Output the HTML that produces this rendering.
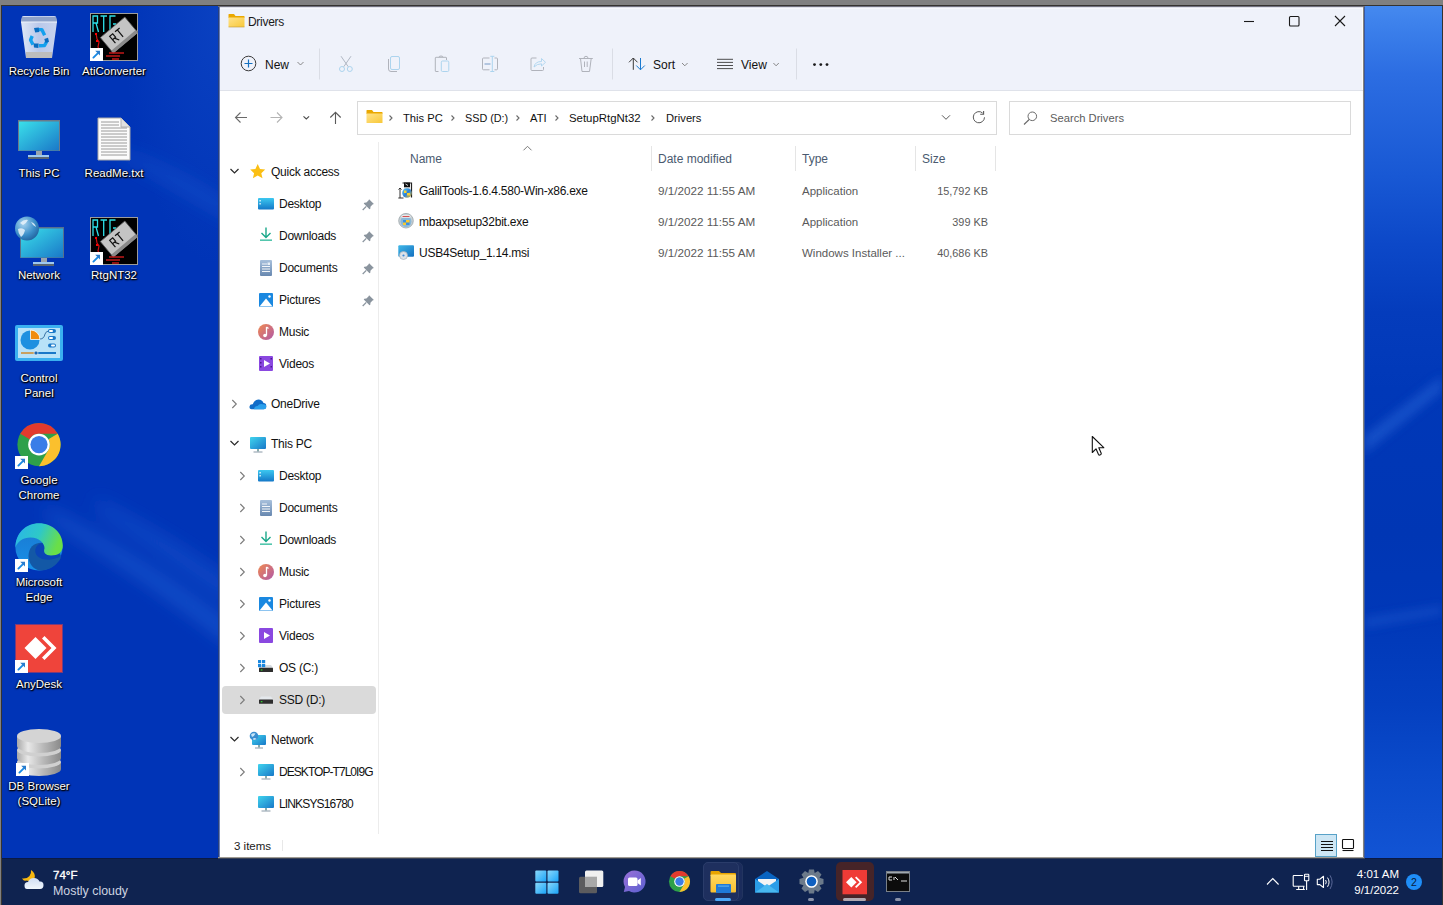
<!DOCTYPE html>
<html><head><meta charset="utf-8">
<style>
*{margin:0;padding:0;box-sizing:border-box}
html,body{width:1443px;height:905px;overflow:hidden;background:#808080;font-family:"Liberation Sans",sans-serif;position:relative}
.a{position:absolute;display:block}
.t{position:absolute;white-space:nowrap;font-size:11.5px;line-height:14px;color:#111}
.lbl{position:absolute;width:90px;text-align:center;color:#fff;font-size:11.5px;line-height:15px;text-shadow:1px 1px 1px #000,0 0 2px #000,0 1px 2px #000}
.sep{position:absolute;width:1px;background:#dde0e7}
</style></head><body>
<div class="a" style="left:1px;top:5px;width:1442px;height:900px;background:#353330"></div>
<svg class="a" style="left:2px;top:6px" width="1440" height="852">
<defs>
<linearGradient id="rg" x1="0" y1="0" x2="0" y2="1">
<stop offset="0" stop-color="#4589ef"/><stop offset="0.03" stop-color="#3a7eea"/><stop offset="0.08" stop-color="#2c6de2"/><stop offset="0.2" stop-color="#1858d4"/><stop offset="0.28" stop-color="#0c48c8"/><stop offset="0.36" stop-color="#043cbc"/><stop offset="0.45" stop-color="#0038b8"/><stop offset="0.62" stop-color="#0036b4"/><stop offset="0.72" stop-color="#0038b8"/><stop offset="0.82" stop-color="#0440c0"/><stop offset="0.9" stop-color="#0a4aca"/><stop offset="1" stop-color="#1254d4"/>
</linearGradient>
<linearGradient id="streak" x1="0" y1="0" x2="1" y2="0">
<stop offset="0" stop-color="#3f80ea" stop-opacity="0"/><stop offset="0.5" stop-color="#3f80ea" stop-opacity="0.5"/><stop offset="1" stop-color="#3f80ea" stop-opacity="0"/>
</linearGradient>
<radialGradient id="tr" cx="1" cy="0" r="1">
<stop offset="0" stop-color="#1a55d0" stop-opacity="0.4"/><stop offset="1" stop-color="#1a55d0" stop-opacity="0"/>
</radialGradient>
</defs>
<rect x="0" y="0" width="1440" height="852" fill="#0034b7"/>
<rect x="120" y="0" width="98" height="260" fill="url(#tr)"/>
<rect x="1362" y="0" width="78" height="852" fill="url(#rg)"/>
<g filter="url(#blr2)"><path d="M1362 430 L1440 370 L1440 385 L1362 448 Z" fill="#3a7ce8" opacity="0.35"/><path d="M1362 612 L1440 600 L1440 608 L1362 622 Z" fill="#3a7ce8" opacity="0.25"/></g>
<filter id="blr2" x="-50%" y="-50%" width="200%" height="200%"><feGaussianBlur stdDeviation="5"/></filter>
<filter id="blr" x="-50%" y="-50%" width="200%" height="200%"><feGaussianBlur stdDeviation="9"/></filter>
<g filter="url(#blr)"><path d="M40 500 Q140 550 230 620 L230 640 Q140 570 50 515 Z" fill="#3a7ce8" opacity="0.4"/>
<path d="M90 490 Q170 530 230 575 L230 600 Q160 550 100 510 Z" fill="#2f6ee0" opacity="0.3"/></g>
<g filter="url(#blr)"><path d="M110 140 Q170 160 230 200 L230 215 Q170 180 120 152 Z" fill="#2f6ee0" opacity="0.3"/></g>
</svg>
<svg width="0" height="0" style="position:absolute">
<defs>
<symbol id="sc" viewBox="0 0 13 13"><rect x="0" y="0" width="13" height="13" fill="#fff"/><path d="M3.4 9.6 L8.2 4.8" stroke="#1a8ae4" stroke-width="1.9" stroke-linecap="round"/><path d="M5.2 2.8 H10 V7.6 Z" fill="#2a7ccc"/></symbol>
<symbol id="rtg" viewBox="0 0 48 48">
<rect x="0.5" y="0.5" width="47" height="47" fill="#000" stroke="#9c9c9c"/>
<g fill="none" stroke="#2de0e8" stroke-width="1.3">
<path d="M3 19 V3 H7.5 V10 H3 M6 10 L8.5 19"/><path d="M10.5 3 H17 M13.7 3 V19"/><path d="M25.5 3 H20 V19 H25.5 V11 H23"/>
</g>
<path d="M6 20 L7 26 L9 29 L8 34 L10 38" stroke="#d01010" stroke-width="1.2" fill="none"/>
<rect x="5" y="20" width="2" height="2" fill="#f00"/><rect x="6" y="27" width="2" height="2" fill="#f00"/>
<g transform="rotate(-40 29 22)"><rect x="13" y="12" width="32" height="20" fill="#c4c4c4" stroke="#555" stroke-width="0.8"/><rect x="13" y="29" width="32" height="3.5" fill="#8a8a8a"/>
<path d="M21 26 V17 H25 V21.5 H21 M23.5 21.5 L26 26 M28 17 H34 M31 17 V26" stroke="#111" stroke-width="1.2" fill="none"/></g>
<path d="M19 40 H34 M16 43 H30 M22 46 H29" stroke="#c01818" stroke-width="1.5"/>
</symbol>
</defs></svg>
<!-- Recycle bin -->
<svg class="a" style="left:19px;top:14px" width="40" height="46" viewBox="0 0 40 46">
<defs><linearGradient id="bin" x1="0" x2="1"><stop offset="0" stop-color="#dfe7f6"/><stop offset="0.5" stop-color="#b9c8ea"/><stop offset="1" stop-color="#c8d3ee"/></linearGradient></defs>
<path d="M3 3 Q3 2 5 2 H35 Q37 2 37 3 L38 8 L33 44 H7 L2 8 Z" fill="url(#bin)"/>
<path d="M3 3 H37 L38 8 H2 Z" fill="#8ea2c8"/>
<path d="M2 8 H38" stroke="#eef3fc" stroke-width="1"/>
<rect x="7" y="38" width="26" height="6" fill="#bdbdbd"/>
<g fill="none" stroke-width="3.4" stroke="#14a0ee" stroke-linejoin="round">
<path d="M19.5 15.6 L22.8 15.6 L25.6 21.3"/>
<path d="M13.2 22 L11.6 26 L14 30.8"/>
<path d="M20 31.8 L25.5 31.5 L28 27"/>
</g>
<g fill="#0a6cc0"><path d="M15 14 L19.8 13.6 L20.2 18 L16.2 18.6Z"/><path d="M14.6 29.4 L19.6 29.6 L19.4 34 L15 33.6Z"/><path d="M25.3 25 L29 23.8 L30 27.8 L26.5 29Z"/></g>
</svg>
<div class="lbl" style="left:-6px;top:64px">Recycle Bin</div>
<svg class="a" style="left:90px;top:13px" width="48" height="48"><use href="#rtg"/><use href="#sc" x="0" y="35" width="13" height="13"/></svg>
<div class="lbl" style="left:69px;top:64px">AtiConverter</div>
<!-- This PC -->
<svg class="a" style="left:17px;top:118px" width="44" height="42" viewBox="0 0 44 42">
<defs><linearGradient id="mon" x1="0" y1="0" x2="1" y2="1"><stop offset="0" stop-color="#3ae0ea"/><stop offset="1" stop-color="#1a78c8"/></linearGradient></defs>
<rect x="1" y="2" width="42" height="31" fill="#6a7a8a"/>
<rect x="2" y="3.5" width="40" height="29" fill="url(#mon)"/>
<rect x="19" y="33" width="6" height="5" fill="#9aa4ae"/>
<rect x="11" y="37" width="21" height="2" fill="#9ec8f0"/>
<rect x="11" y="39" width="21" height="2" fill="#5a6572"/>
</svg>
<div class="lbl" style="left:-6px;top:166px">This PC</div>
<!-- ReadMe -->
<svg class="a" style="left:97px;top:117px" width="34" height="44" viewBox="0 0 34 44">
<path d="M1 1 H24 L33 10 V43 H1 Z" fill="#fbfbfb" stroke="#a8a8a8" stroke-width="1"/>
<path d="M24 1 V10 H33" fill="#e0e0e0" stroke="#b0b0b0" stroke-width="1"/>
<g stroke="#9a9a9a" stroke-width="1"><path d="M4 5 H22 M4 8 H22 M4 11 H30 M4 14 H30 M4 17 H30 M4 20 H30 M4 23 H30 M4 26 H30 M4 29 H30 M4 32 H30 M4 35 H30 M4 38 H30"/></g>
</svg>
<div class="lbl" style="left:69px;top:166px">ReadMe.txt</div>
<!-- Network -->
<svg class="a" style="left:14px;top:215px" width="50" height="52" viewBox="0 0 50 52">
<defs><radialGradient id="glb" cx="0.35" cy="0.3" r="0.8"><stop offset="0" stop-color="#a8d4f0"/><stop offset="0.6" stop-color="#3b8ec8"/><stop offset="1" stop-color="#1e5c98"/></radialGradient></defs>
<rect x="6" y="12" width="44" height="31" fill="#56708e"/>
<rect x="7" y="13.5" width="42" height="29" fill="url(#mon)"/>
<rect x="27" y="43" width="6" height="5" fill="#9aa4ae"/>
<rect x="19" y="47" width="21" height="2" fill="#9ec8f0"/>
<rect x="19" y="49" width="21" height="2" fill="#5a6572"/>
<circle cx="13" cy="13.5" r="12" fill="url(#glb)"/>
<path d="M6 8 Q10 4 14 5 Q12 9 9 10 Z M4 14 Q8 12 11 15 Q10 20 7 22 Q4 18 4 14 Z M17 7 Q21 8 22 12 Q19 11 17 7Z" fill="#e8f2fa" opacity="0.85"/>
</svg>
<div class="lbl" style="left:-6px;top:268px">Network</div>
<svg class="a" style="left:90px;top:217px" width="48" height="48"><use href="#rtg"/><use href="#sc" x="0" y="35" width="13" height="13"/></svg>
<div class="lbl" style="left:69px;top:268px">RtgNT32</div>
<!-- Control panel -->
<svg class="a" style="left:15px;top:325px" width="48" height="37" viewBox="0 0 48 37">
<rect x="0" y="0" width="48" height="36" rx="2" fill="#3ab0f0"/>
<rect x="3" y="3" width="42" height="30" fill="#b8e2f8"/>
<circle cx="15" cy="15" r="9.5" fill="#1e90e0"/>
<path d="M15.5 5 A9.5 9.5 0 0 1 25 14.5 H15.5 Z" fill="#f08c10" stroke="#fff" stroke-width="0.8"/>
<path d="M25 14 Q29 14 30 9 Q31 6 34 6" stroke="#1a5890" stroke-width="0.8" fill="none"/>
<g fill="#1a78c8"><rect x="33" y="4" width="8" height="4" rx="2"/><rect x="33" y="11" width="8" height="4" rx="2"/><rect x="33" y="18.5" width="8" height="4" rx="2"/></g>
<g fill="#fff"><rect x="34" y="5" width="4" height="2" rx="1"/><rect x="34" y="12" width="4" height="2" rx="1"/><rect x="36" y="19.5" width="4" height="2" rx="1"/></g>
<rect x="6" y="27" width="14" height="2" fill="#c8a060"/><rect x="22" y="27" width="19" height="2" fill="#1a78c8"/><circle cx="21" cy="28" r="2" fill="#1a68b0" stroke="#fff" stroke-width="0.6"/>
</svg>
<div class="lbl" style="left:-6px;top:371px">Control<br>Panel</div>
<!-- Chrome -->
<svg class="a" style="left:15px;top:421px" width="48" height="48" viewBox="0 0 48 48">
<circle cx="24" cy="23.6" r="21.6" fill="#2ea04a"/>
<path d="M24 2 A21.6 21.6 0 0 1 42.7 12.8 L24 12.8 A10.8 10.8 0 0 0 14.6 18.2 L5.3 12.8 A21.6 21.6 0 0 1 24 2Z" fill="#e23a2e"/>
<path d="M42.7 12.8 A21.6 21.6 0 0 1 24 45.2 L33.4 29 A10.8 10.8 0 0 0 33.4 18.2 Z" fill="#fbc02d"/>
<circle cx="24" cy="23.6" r="10.8" fill="#fff"/>
<circle cx="24" cy="23.6" r="8.6" fill="#3a7de8"/>
<use href="#sc" x="0" y="35" width="13" height="13"/>
</svg>
<div class="lbl" style="left:-6px;top:473px">Google<br>Chrome</div>
<!-- Edge -->
<svg class="a" style="left:14px;top:522px" width="50" height="50" viewBox="0 0 50 50">
<defs><linearGradient id="eg1" x1="0" y1="0" x2="1" y2="0.3"><stop offset="0" stop-color="#2ab4ea"/><stop offset="0.55" stop-color="#2ec8c8"/><stop offset="1" stop-color="#6ade48"/></linearGradient>
<linearGradient id="eg2" x1="0" y1="0" x2="0" y2="1"><stop offset="0" stop-color="#1a78d0"/><stop offset="1" stop-color="#1890e8"/></linearGradient></defs>
<circle cx="25" cy="25" r="23.6" fill="url(#eg2)"/>
<path d="M14.5 34 C14.5 25 21 19.5 30.5 21 C42 23 47 30 46.8 36 C43 43.5 35 48.5 27 48.5 C20 48.3 14.5 42 14.5 34 Z" fill="#1358a6"/>
<path d="M30.5 21 C24 20.5 20.5 25.5 21.5 30.5 C22.5 36 30 38.5 37 37.5 C41.5 36.8 45 35.5 46.8 34 C45 31 41 33 37 33 C31.5 33 29.5 30 30.5 26.5 Z" fill="#0a44b6"/>
<path d="M1.4 25.5 C1.5 11 12 1.2 25 1.2 C38.5 1.2 48.8 11 48.8 23.5 C48.8 30.5 44 33.5 37 33.5 C31.5 33.5 29 30.5 30.5 26.5 C31 22 25.5 15.5 16.5 15.5 C9 15.5 3.5 19.5 1.4 25.5 Z" fill="url(#eg1)"/>
<use href="#sc" x="1" y="37" width="13" height="13"/>
</svg>
<div class="lbl" style="left:-6px;top:575px">Microsoft<br>Edge</div>
<!-- AnyDesk -->
<svg class="a" style="left:15px;top:624px" width="48" height="49" viewBox="0 0 48 49">
<rect x="0" y="0" width="48" height="49" fill="#7a3a7a"/>
<rect x="1" y="1" width="46" height="47" fill="#ef443b"/>
<path d="M9.5 24 L20.5 13 L31.5 24 L20.5 35 Z" fill="#fff"/>
<path d="M27 14.5 L29.5 12 L41.5 24 L29.5 36 L27 33.5 L36.5 24 Z" fill="#fff"/>
<use href="#sc" x="0" y="36" width="13" height="13"/>
</svg>
<div class="lbl" style="left:-6px;top:677px">AnyDesk</div>
<!-- DB Browser -->
<svg class="a" style="left:16px;top:728px" width="46" height="50" viewBox="0 0 46 50">
<defs><linearGradient id="cyl" x1="0" x2="1"><stop offset="0" stop-color="#a8a8a8"/><stop offset="0.25" stop-color="#e8e8e8"/><stop offset="0.6" stop-color="#b8b8b8"/><stop offset="1" stop-color="#8a8a8a"/></linearGradient></defs>
<path d="M1 34 V41 A22 7 0 0 0 45 41 V34 Z" fill="url(#cyl)"/>
<ellipse cx="23" cy="34" rx="22" ry="6.5" fill="#d0d0d0"/>
<path d="M1 22 V30 A22 7 0 0 0 45 30 V22 Z" fill="url(#cyl)"/>
<ellipse cx="23" cy="22" rx="22" ry="6.5" fill="#d0d0d0"/>
<path d="M1 8 V18 A22 7 0 0 0 45 18 V8 Z" fill="url(#cyl)"/>
<ellipse cx="23" cy="8" rx="22" ry="7" fill="#d4d4d4"/>
<use href="#sc" x="0" y="35" width="13" height="13"/>
</svg>
<div class="lbl" style="left:-6px;top:779px">DB Browser<br>(SQLite)</div>
<!-- Explorer window -->
<div class="a" style="left:218px;top:6px;width:1px;height:852px;background:#28407e"></div>
<div class="a" style="left:219px;top:6px;width:1px;height:852px;background:#6a80b8"></div>
<div class="a" style="left:1363px;top:6px;width:1px;height:852px;background:#85837c"></div>
<div class="a" style="left:1364px;top:6px;width:1px;height:852px;background:#3a58a0"></div>
<div class="a" style="left:218px;top:6px;width:1147px;height:1px;background:#70707c"></div>
<div class="a" style="left:220px;top:7px;width:1143px;height:850px;background:#fff"></div>
<div class="a" style="left:220px;top:7px;width:1143px;height:83px;background:#eff2fa"></div>
<div class="a" style="left:220px;top:7px;width:1143px;height:1px;background:#dfe1ea"></div>
<div class="a" style="left:220px;top:8px;width:1143px;height:1px;background:#f7f8fd"></div>
<div class="a" style="left:1362px;top:8px;width:1px;height:848px;background:#fbfbfd"></div>
<div class="a" style="left:218px;top:857px;width:1146px;height:1px;background:#a09c94"></div>
<div class="a" style="left:220px;top:90px;width:1143px;height:1px;background:#dfe2ea"></div>
<!-- title -->
<svg class="a" style="left:228px;top:13px" width="17" height="15" viewBox="0 0 17 15">
<defs><linearGradient id="fold" x1="0" y1="0" x2="1" y2="1"><stop offset="0" stop-color="#ffe28a"/><stop offset="1" stop-color="#f8c838"/></linearGradient></defs>
<path d="M0.5 1.5 Q0.5 1 1 1 H6 L7.5 3 H16 Q16.5 3 16.5 3.5 V5 H0.5 Z" fill="#eaa800"/>
<rect x="0.5" y="4.5" width="16" height="9.5" rx="0.5" fill="url(#fold)"/>
<rect x="0.5" y="13.5" width="16" height="1" fill="#c0983a" opacity="0.6"/>
</svg>
<div class="t" style="left:248px;top:15px;font-size:12px;letter-spacing:-0.3px;color:#1a1a1a">Drivers</div>
<svg class="a" style="left:1230px;top:8px" width="130" height="26">
<path d="M14 13.5 H24" stroke="#1a1a1a" stroke-width="1.1"/>
<rect x="59.5" y="8.5" width="9.5" height="9.5" rx="1" fill="none" stroke="#1a1a1a" stroke-width="1.1"/>
<path d="M105 8 L115 18 M115 8 L105 18" stroke="#1a1a1a" stroke-width="1.1"/>
</svg>
<!-- command bar -->
<svg class="a" style="left:220px;top:40px" width="640" height="50">
<circle cx="28.5" cy="23.5" r="7.3" fill="none" stroke="#3a3a3a" stroke-width="1"/>
<path d="M28.5 19.5 V27.5 M24.5 23.5 H32.5" stroke="#1470c0" stroke-width="1.2"/>
<path d="M77.5 22 L80.5 25 L83.5 22" stroke="#7a7a7a" stroke-width="0.9" fill="none"/>
<rect x="99" y="8.5" width="1" height="31" fill="#dadde5"/>
<!-- cut -->
<path d="M121 16.2 L128.3 26.8 M131 16.2 L123.7 26.8" stroke="#a8b0bc" stroke-width="0.9" fill="none"/>
<circle cx="122" cy="29" r="2.5" fill="none" stroke="#acd4ee" stroke-width="1"/><circle cx="129.8" cy="29" r="2.5" fill="none" stroke="#acd4ee" stroke-width="1"/>
<!-- copy -->
<path d="M168.5 19 V29 Q168.5 31.5 171 31.5 H177" stroke="#b0b3bb" stroke-width="1" fill="none"/>
<rect x="170.5" y="16.5" width="9" height="13" rx="1.5" fill="none" stroke="#acd4ee" stroke-width="1"/>
<!-- paste -->
<path d="M218.5 31.5 H215.8 Q215.3 31.5 215.3 31 V18 Q215.3 17.3 216 17.3 H226 Q226.5 17.3 226.5 18 V20" stroke="#b0b3bb" stroke-width="1" fill="none"/>
<path d="M219 17.3 Q219 16 221 16 Q223 16 223 17.3" stroke="#b0b3bb" stroke-width="1" fill="none"/>
<rect x="221.3" y="21" width="7.5" height="10.5" rx="1.2" fill="none" stroke="#acd4ee" stroke-width="1"/>
<!-- rename -->
<path d="M269.5 18 H263.5 Q262.5 18 262.5 19 V28.8 Q262.5 29.8 263.5 29.8 H269.5 M274.5 18 H276.5 Q277.5 18 277.5 19 V28.8 Q277.5 29.8 276.5 29.8 H274.5" stroke="#b0b3bb" stroke-width="1" fill="none"/>
<path d="M264.5 24 H270.5" stroke="#9ab4d4" stroke-width="1.4"/>
<path d="M272.3 16.3 V31.5 M270.3 16.3 H274.3 M270.3 31.5 H274.3" stroke="#acd4ee" stroke-width="1" fill="none"/>
<!-- share -->
<path d="M316.5 18 H312 Q311 18 311 19 V29.5 Q311 30.5 312 30.5 H322.5 Q323.5 30.5 323.5 29.5 V27" stroke="#b0b3bb" stroke-width="1" fill="none"/>
<path d="M314 27 Q315 21.5 321.5 21.5 V18.5 L325.5 22.3 L321.5 26 V23.8 Q317 23.8 314 27 Z" stroke="#acd4ee" stroke-width="0.9" fill="none"/>
<!-- delete -->
<path d="M359 18.5 H372.8 M360.5 18.5 L362 31.5 H369.5 L371.2 18.5 M364 18.3 Q364 16.3 366 16.3 Q368 16.3 368 18.3 M364.5 21.5 V27 M367.2 21.5 V27" stroke="#b0b3bb" stroke-width="1" fill="none"/>
<rect x="392" y="8.5" width="1" height="31" fill="#dadde5"/>
<!-- sort -->
<path d="M413.3 29.8 V18 M409 22.3 L413.3 18 L417.5 22.3" stroke="#3a3a3a" stroke-width="1" fill="none"/>
<path d="M420.5 18 V29.8 M416.3 25.5 L420.5 29.8 L424.8 25.5" stroke="#1a7ad0" stroke-width="1" fill="none"/>
<path d="M462 23 L464.8 25.8 L467.6 23" stroke="#7a7a7a" stroke-width="0.9" fill="none"/>
<!-- view -->
<path d="M497 19.3 H513 M497 22.4 H513 M497 25.5 H513 M497 28.6 H513" stroke="#3a3a3a" stroke-width="0.9"/>
<path d="M553.4 23 L556.1 25.8 L558.8 23" stroke="#7a7a7a" stroke-width="0.9" fill="none"/>
<rect x="576" y="8.5" width="1" height="31" fill="#dadde5"/>
<circle cx="594.5" cy="24.6" r="1.4" fill="#1a1a1a"/><circle cx="600.8" cy="24.6" r="1.4" fill="#1a1a1a"/><circle cx="607" cy="24.6" r="1.4" fill="#1a1a1a"/>
</svg>
<div class="t" style="left:265px;top:58px;font-size:12px">New</div>
<div class="t" style="left:653px;top:58px;font-size:12px">Sort</div>
<div class="t" style="left:741px;top:58px;font-size:12px">View</div>
<!-- nav row -->
<svg class="a" style="left:220px;top:96px" width="140" height="44">
<path d="M27 21.5 H15.5 M20.5 16.5 L15.5 21.5 L20.5 26.5" stroke="#6a6a6a" stroke-width="1.1" fill="none"/>
<path d="M50.5 21.5 H62 M57 16.5 L62 21.5 L57 26.5" stroke="#b4b4b4" stroke-width="1.1" fill="none"/>
<path d="M83.5 20.3 L86.3 23 L89.1 20.3" stroke="#4a4a4a" stroke-width="1.1" fill="none"/>
<path d="M115.5 28 V16.5 M110.3 21.5 L115.5 16.3 L120.7 21.5" stroke="#5a5a5a" stroke-width="1.1" fill="none"/>
</svg>
<div class="a" style="left:357px;top:101px;width:640px;height:34px;border:1px solid #dadada;background:#fff"></div>
<svg class="a" style="left:366px;top:109px" width="17" height="15" viewBox="0 0 17 15">
<path d="M0.5 1.5 Q0.5 1 1 1 H6 L7.5 3 H16 Q16.5 3 16.5 3.5 V5 H0.5 Z" fill="#eaa800"/>
<rect x="0.5" y="4.5" width="16" height="9.5" rx="0.5" fill="url(#fold)"/>
</svg>
<svg class="a" style="left:380px;top:108px" width="620" height="20">
<g stroke="#6a6a6a" stroke-width="1.1" fill="none">
<path d="M9.5 7.5 L12 10 L9.5 12.5"/><path d="M71.5 7.5 L74 10 L71.5 12.5"/><path d="M136.5 7.5 L139 10 L136.5 12.5"/><path d="M175.5 7.5 L178 10 L175.5 12.5"/><path d="M271.5 7.5 L274 10 L271.5 12.5"/>
</g>
<path d="M562 7.3 L566 11.3 L570 7.3" stroke="#5a5a5a" stroke-width="1" fill="none"/>
<path d="M602.6 5.0 A5.6 5.6 0 1 0 604.5 9.3" stroke="#5a5a5a" stroke-width="1" fill="none"/><path d="M603.6 3.1 V6.3 H600.2" stroke="#5a5a5a" stroke-width="1.1" fill="none"/>
</svg>
<div class="t" style="left:403px;top:111px;font-size:11.2px">This PC</div>
<div class="t" style="left:465px;top:111px;font-size:10.8px">SSD (D:)</div>
<div class="t" style="left:530px;top:111px;font-size:11.2px">ATI</div>
<div class="t" style="left:569px;top:111px;font-size:11.4px">SetupRtgNt32</div>
<div class="t" style="left:666px;top:111px;font-size:11.2px">Drivers</div>
<div class="a" style="left:1009px;top:101px;width:342px;height:34px;border:1px solid #dadada;background:#fff"></div>
<svg class="a" style="left:1020px;top:108px" width="20" height="20">
<circle cx="12.3" cy="8.3" r="4.3" fill="none" stroke="#6a6a6a" stroke-width="1"/>
<path d="M9.2 11.5 L4 16.5" stroke="#6a6a6a" stroke-width="1.1"/>
</svg>
<div class="t" style="left:1050px;top:111px;font-size:11.2px;color:#5c5c5c">Search Drivers</div>
<!-- nav pane -->
<div class="a" style="left:378px;top:142px;width:1px;height:692px;background:#ececec"></div>
<div class="a" style="left:222px;top:686px;width:154px;height:28px;background:#dadada;border-radius:4px"></div>
<svg class="a" style="left:220px;top:140px" width="160" height="690">
<g stroke="#2a2a2a" stroke-width="1.2" fill="none">
<path d="M10.5 29 L14.5 33 L18.5 29"/><path d="M10.5 301 L14.5 305 L18.5 301"/><path d="M10.5 597 L14.5 601 L18.5 597"/>
</g>
<g stroke="#7a7a7a" stroke-width="1.1" fill="none">
<path d="M12.3 260 L16.3 264 L12.3 268"/>
<path d="M20.3 332 L24.3 336 L20.3 340"/><path d="M20.3 364 L24.3 368 L20.3 372"/><path d="M20.3 396 L24.3 400 L20.3 404"/><path d="M20.3 428 L24.3 432 L20.3 436"/><path d="M20.3 460 L24.3 464 L20.3 468"/><path d="M20.3 492 L24.3 496 L20.3 500"/><path d="M20.3 524 L24.3 528 L20.3 532"/><path d="M20.3 556 L24.3 560 L20.3 564"/><path d="M20.3 628 L24.3 632 L20.3 636"/>
</g>
<!-- nopins -->

</svg>
<!-- nav pane texts -->
<div class="t" style="font-size:12px;letter-spacing:-0.25px;left:271px;top:165px">Quick access</div>
<div class="t" style="font-size:12px;letter-spacing:-0.25px;left:279px;top:197px">Desktop</div>
<div class="t" style="font-size:12px;letter-spacing:-0.25px;left:279px;top:229px">Downloads</div>
<div class="t" style="font-size:12px;letter-spacing:-0.25px;left:279px;top:261px">Documents</div>
<div class="t" style="font-size:12px;letter-spacing:-0.25px;left:279px;top:293px">Pictures</div>
<div class="t" style="font-size:12px;letter-spacing:-0.25px;left:279px;top:325px">Music</div>
<div class="t" style="font-size:12px;letter-spacing:-0.25px;left:279px;top:357px">Videos</div>
<div class="t" style="font-size:12px;letter-spacing:-0.25px;left:271px;top:397px">OneDrive</div>
<div class="t" style="font-size:12px;letter-spacing:-0.25px;left:271px;top:437px">This PC</div>
<div class="t" style="font-size:12px;letter-spacing:-0.25px;left:279px;top:469px">Desktop</div>
<div class="t" style="font-size:12px;letter-spacing:-0.25px;left:279px;top:501px">Documents</div>
<div class="t" style="font-size:12px;letter-spacing:-0.25px;left:279px;top:533px">Downloads</div>
<div class="t" style="font-size:12px;letter-spacing:-0.25px;left:279px;top:565px">Music</div>
<div class="t" style="font-size:12px;letter-spacing:-0.25px;left:279px;top:597px">Pictures</div>
<div class="t" style="font-size:12px;letter-spacing:-0.25px;left:279px;top:629px">Videos</div>
<div class="t" style="font-size:12px;letter-spacing:-0.25px;left:279px;top:661px">OS (C:)</div>
<div class="t" style="font-size:12px;letter-spacing:-0.25px;left:279px;top:693px">SSD (D:)</div>
<div class="t" style="font-size:12px;letter-spacing:-0.25px;left:271px;top:733px">Network</div>
<div class="t" style="font-size:12px;left:279px;top:765px;letter-spacing:-0.95px">DESKTOP-T7L0I9G</div>
<div class="t" style="font-size:12px;left:279px;top:797px;letter-spacing:-0.85px">LINKSYS16780</div>
<!-- nav icons -->
<svg class="a" style="left:240px;top:155px" width="40" height="670">
<defs>
<linearGradient id="dsk" x1="0" y1="0" x2="0" y2="1"><stop offset="0" stop-color="#3cc8f0"/><stop offset="1" stop-color="#1478c8"/></linearGradient>
<linearGradient id="mus" x1="0" y1="0" x2="1" y2="1"><stop offset="0" stop-color="#f08a50"/><stop offset="1" stop-color="#b058a8"/></linearGradient>
<linearGradient id="doc" x1="0" y1="0" x2="0" y2="1"><stop offset="0" stop-color="#a8c0dc"/><stop offset="1" stop-color="#6888b0"/></linearGradient>
<linearGradient id="pc" x1="0" y1="0" x2="1" y2="1"><stop offset="0" stop-color="#40d4ee"/><stop offset="1" stop-color="#1878c8"/></linearGradient>
</defs>
<!-- star -->
<path d="M17.7 9 L20 14 L25.2 14.6 L21.3 18.2 L22.5 23.3 L17.7 20.6 L12.9 23.3 L14.1 18.2 L10.2 14.6 L15.4 14 Z" fill="#fbbf14"/>
<!-- desktop quick -->
<rect x="18" y="43" width="16" height="11.5" rx="1" fill="url(#dsk)"/><rect x="19.5" y="45" width="1.2" height="1.5" fill="#fff"/><rect x="19.5" y="48" width="1.2" height="1.5" fill="#fff"/>
<!-- downloads -->
<path d="M26 72.5 V82.5 M21.5 78 L26 82.5 L30.5 78" stroke="#1aa88a" stroke-width="1.4" fill="none"/><rect x="20" y="84.5" width="12" height="1.3" fill="#2ab89a"/>
<!-- documents -->
<rect x="20" y="105" width="12" height="16" rx="1" fill="url(#doc)"/><path d="M22 109 H27 M22 111.5 H30 M22 114 H30 M22 116.5 H30" stroke="#fff" stroke-width="0.9"/><rect x="27.5" y="107.5" width="2.5" height="2.5" fill="#e8f0f8"/>
<!-- pictures -->
<rect x="19" y="138" width="14" height="14" rx="1" fill="#1a88e0"/><path d="M19.5 151.5 L26 143.5 L32.5 151.5 Z" fill="#fff"/><circle cx="29.5" cy="141.5" r="1.2" fill="#fff"/>
<!-- music -->
<circle cx="26" cy="177" r="8" fill="url(#mus)"/><path d="M26.5 172 V180.5" stroke="#fff" stroke-width="1.3"/><circle cx="25" cy="180.5" r="1.8" fill="#fff"/><path d="M26.5 172 L28.5 173.5" stroke="#fff" stroke-width="1.2"/>
<!-- videos -->
<rect x="19" y="201" width="14" height="15" rx="1" fill="#8a48e0"/><path d="M24 205 L30 208.5 L24 212 Z" fill="#fff"/><g fill="#4a1890"><rect x="20" y="203" width="1.5" height="1.5"/><rect x="20" y="207" width="1.5" height="1.5"/><rect x="20" y="211" width="1.5" height="1.5"/><rect x="30.5" y="203" width="1.5" height="1.5"/><rect x="30.5" y="211" width="1.5" height="1.5"/></g>
<!-- onedrive -->
<path d="M11.5 254.2 Q9.3 254.2 9.5 251.5 Q9.8 249 12.8 249.3 Q14 245 18.3 244.5 Q22.3 244.5 23.5 248 Q26.3 248 26.3 251.2 Q26.2 254.2 23.5 254.2 Z" fill="#0f6cc8"/>
<path d="M14 254.2 Q14.2 251.3 17.5 251 Q19.5 248.5 22.5 249.3 Q26.3 249 26.3 252 Q26.2 254.2 24 254.2Z" fill="#2aa0ec"/>
<!-- this pc -->
<rect x="10" y="282" width="16" height="12" rx="1" fill="url(#pc)"/><rect x="17" y="294" width="2" height="2.5" fill="#8aa"/><rect x="13.5" y="296.5" width="9" height="1" fill="#8a9aa8"/>
<!-- children -->
<rect x="18" y="315" width="16" height="11.5" rx="1" fill="url(#dsk)"/><rect x="19.5" y="317" width="1.2" height="1.5" fill="#fff"/><rect x="19.5" y="320" width="1.2" height="1.5" fill="#fff"/>
<rect x="20" y="345" width="12" height="16" rx="1" fill="url(#doc)"/><path d="M22 349 H27 M22 351.5 H30 M22 354 H30 M22 356.5 H30" stroke="#fff" stroke-width="0.9"/>
<path d="M26 376.5 V386.5 M21.5 382 L26 386.5 L30.5 382" stroke="#1aa88a" stroke-width="1.4" fill="none"/><rect x="20" y="388.5" width="12" height="1.3" fill="#2ab89a"/>
<circle cx="26" cy="417" r="8" fill="url(#mus)"/><path d="M26.5 412 V420.5" stroke="#fff" stroke-width="1.3"/><circle cx="25" cy="420.5" r="1.8" fill="#fff"/><path d="M26.5 412 L28.5 413.5" stroke="#fff" stroke-width="1.2"/>
<rect x="19" y="442" width="14" height="14" rx="1" fill="#1a88e0"/><path d="M19.5 455.5 L26 447.5 L32.5 455.5 Z" fill="#fff"/><circle cx="29.5" cy="445.5" r="1.2" fill="#fff"/>
<rect x="19" y="473" width="14" height="15" rx="1" fill="#8a48e0"/><path d="M24 477 L30 480.5 L24 484 Z" fill="#fff"/>
<!-- OS C -->
<path d="M21 510 H31 L33 512.8 H19Z" fill="#d8dde2"/>
<rect x="19" y="512.7" width="14" height="4.3" rx="0.5" fill="#2e2e2e"/><rect x="20.8" y="514.3" width="1.6" height="1.3" fill="#3c3"/>
<g fill="#1a88e0"><rect x="18" y="505" width="3.2" height="3.2"/><rect x="22" y="505" width="3.2" height="3.2"/><rect x="18" y="509" width="3.2" height="3.2"/><rect x="22" y="509" width="3.2" height="3.2"/></g>
<!-- SSD D -->
<path d="M21 541.5 H31 L33 544.5 H19Z" fill="#e4e8ec"/>
<rect x="19" y="544.5" width="14" height="4.3" rx="0.5" fill="#2e2e2e"/><rect x="20.8" y="546" width="1.6" height="1.3" fill="#3c3"/>
<!-- network -->
<rect x="12" y="580" width="14" height="10" rx="1" fill="url(#pc)"/><rect x="18" y="590" width="2" height="2.5" fill="#8aa"/><rect x="15" y="592.5" width="8" height="1" fill="#8a9aa8"/>
<circle cx="14" cy="581" r="4.3" fill="#3a8ed0"/><path d="M11 579.5 Q13 577.5 15.5 578.5 Q14.5 581 12 582Z M13 583.5 Q15 582.5 16.5 584 Q15 585 13.5 585Z" fill="#e0f4ff" opacity="0.85"/>
<!-- desktop-t7 -->
<rect x="18" y="609" width="16" height="12" rx="1" fill="url(#pc)"/><rect x="25" y="621" width="2" height="2.5" fill="#8aa"/><rect x="21.5" y="623.5" width="9" height="1" fill="#8a9aa8"/>
<rect x="18" y="641" width="16" height="12" rx="1" fill="url(#pc)"/><rect x="25" y="653" width="2" height="2.5" fill="#8aa"/><rect x="21.5" y="655.5" width="9" height="1" fill="#8a9aa8"/>
</svg>
<svg class="a" style="left:360px;top:197px" width="18" height="112"><g transform="translate(1.5 1.5) scale(0.8)"><path d="M9.5 0.8 L15.5 6.8 L13.8 7.6 L11.2 10.2 L11 12.8 L10 13.5 L2.8 6.3 L3.5 5.3 L6.1 5.1 L8.7 2.5 Z" fill="#8a949e"/><path d="M6 9.8 L1.5 14.3" stroke="#8a949e" stroke-width="1.6"/></g><g transform="translate(1.5 33.5) scale(0.8)"><path d="M9.5 0.8 L15.5 6.8 L13.8 7.6 L11.2 10.2 L11 12.8 L10 13.5 L2.8 6.3 L3.5 5.3 L6.1 5.1 L8.7 2.5 Z" fill="#8a949e"/><path d="M6 9.8 L1.5 14.3" stroke="#8a949e" stroke-width="1.6"/></g><g transform="translate(1.5 65.5) scale(0.8)"><path d="M9.5 0.8 L15.5 6.8 L13.8 7.6 L11.2 10.2 L11 12.8 L10 13.5 L2.8 6.3 L3.5 5.3 L6.1 5.1 L8.7 2.5 Z" fill="#8a949e"/><path d="M6 9.8 L1.5 14.3" stroke="#8a949e" stroke-width="1.6"/></g><g transform="translate(1.5 97.5) scale(0.8)"><path d="M9.5 0.8 L15.5 6.8 L13.8 7.6 L11.2 10.2 L11 12.8 L10 13.5 L2.8 6.3 L3.5 5.3 L6.1 5.1 L8.7 2.5 Z" fill="#8a949e"/><path d="M6 9.8 L1.5 14.3" stroke="#8a949e" stroke-width="1.6"/></g></svg>
<!-- content header -->
<div class="t" style="left:410px;top:152px;font-size:12px;color:#4a5a70">Name</div>
<div class="t" style="left:658px;top:152px;font-size:12px;color:#4a5a70">Date modified</div>
<div class="t" style="left:802px;top:152px;font-size:12px;color:#4a5a70">Type</div>
<div class="t" style="left:922px;top:152px;font-size:12px;color:#4a5a70">Size</div>
<svg class="a" style="left:380px;top:140px" width="640" height="40">
<path d="M143.5 10.3 L147.5 6.3 L151.5 10.3" stroke="#7a7a7a" stroke-width="1" fill="none"/>
<g fill="#e5e5e5"><rect x="271" y="6" width="1" height="25"/><rect x="415" y="6" width="1" height="25"/><rect x="535" y="6" width="1" height="25"/><rect x="615" y="6" width="1" height="25"/></g>
</svg>
<!-- rows -->
<div class="t" style="left:419px;top:184px;font-size:12px;letter-spacing:-0.25px">GalilTools-1.6.4.580-Win-x86.exe</div>
<div class="t" style="left:419px;top:215px;font-size:12px;letter-spacing:-0.25px">mbaxpsetup32bit.exe</div>
<div class="t" style="left:419px;top:246px;font-size:12px;letter-spacing:-0.25px">USB4Setup_1.14.msi</div>
<div class="t" style="left:658px;top:184px;color:#5a5a5a;font-size:11.7px">9/1/2022 11:55 AM</div>
<div class="t" style="left:658px;top:215px;color:#5a5a5a;font-size:11.7px">9/1/2022 11:55 AM</div>
<div class="t" style="left:658px;top:246px;color:#5a5a5a;font-size:11.7px">9/1/2022 11:55 AM</div>
<div class="t" style="left:802px;top:184px;color:#5a5a5a">Application</div>
<div class="t" style="left:802px;top:215px;color:#5a5a5a">Application</div>
<div class="t" style="left:802px;top:246px;color:#5a5a5a">Windows Installer ...</div>
<div class="t" style="left:888px;top:184px;width:100px;text-align:right;color:#5a5a5a;font-size:10.9px">15,792 KB</div>
<div class="t" style="left:888px;top:215px;width:100px;text-align:right;color:#5a5a5a;font-size:10.9px">399 KB</div>
<div class="t" style="left:888px;top:246px;width:100px;text-align:right;color:#5a5a5a;font-size:10.9px">40,686 KB</div>
<svg class="a" style="left:396px;top:180px" width="20" height="80">
<defs><linearGradient id="glb2" x1="0" y1="0" x2="1" y2="1"><stop offset="0" stop-color="#60d0f0"/><stop offset="0.5" stop-color="#2a80d8"/><stop offset="1" stop-color="#f8c020"/></linearGradient></defs>
<path d="M6.5 3 H15.5 V17.5" stroke="#222" stroke-width="1.2" fill="none"/>
<rect x="8" y="2.5" width="6" height="5" fill="#111"/><path d="M9.5 4 L12 5.5" stroke="#fff" stroke-width="0.8"/>
<rect x="8" y="7.5" width="6" height="3" fill="#ddd"/>
<circle cx="11" cy="13" r="4.8" fill="url(#glb2)"/>
<path d="M8 10.5 H10.5 V13 H8Z M11 13 H14 V15.5 H11Z" fill="#f8d030"/>
<path d="M4 8 V18 M2.3 18 H7.5 M2.5 9.5 L4 8 L5.5 9.5" stroke="#333" stroke-width="1" fill="none"/>
<circle cx="10" cy="40.7" r="7.3" fill="#c8d0d4" stroke="#9aa4aa" stroke-width="0.8"/>
<circle cx="10" cy="41.5" r="5.5" fill="#8ab8d8"/>
<path d="M7 40 H13.5 V45 H7Z" fill="#3a90e0"/><path d="M10 40 H13.5 V42.5 H10Z M7 42.5 H10 V45 H7Z" fill="#f8c830"/>
<rect x="5.5" y="35.3" width="9" height="2.5" rx="1" fill="#f4f0f0"/><path d="M6.5 36.5 H13.5" stroke="#d04040" stroke-width="0.9"/>
<defs><linearGradient id="usb" x1="0" y1="0" x2="1" y2="1"><stop offset="0" stop-color="#40b8e8"/><stop offset="1" stop-color="#1470c0"/></linearGradient></defs>
<rect x="2.3" y="65.3" width="15.7" height="11.5" rx="1" fill="url(#usb)"/>
<circle cx="7.5" cy="75.5" r="4" fill="#dde2e8" stroke="#a8b0b8" stroke-width="0.7"/><circle cx="7.5" cy="75.5" r="1.1" fill="#3a8ad8"/>
</svg>
<!-- status bar -->
<div class="t" style="left:234px;top:839px;font-size:11.5px;color:#1b1b1b">3 items</div>
<div class="a" style="left:282px;top:840px;width:1px;height:11px;background:#e8e8e8"></div>
<div class="a" style="left:1315px;top:834px;width:22px;height:23px;background:#cde6f4;border:1px solid #58a2c8"></div>
<svg class="a" style="left:1315px;top:834px" width="44" height="23">
<path d="M6 7.5 H18 M6 10.5 H18 M6 13.5 H18 M6 16.5 H18" stroke="#111" stroke-width="1.1"/>
<rect x="27.5" y="5.5" width="11" height="9" rx="0.8" fill="none" stroke="#111" stroke-width="1.1"/>
<path d="M27.5 16.5 H38.5" stroke="#111" stroke-width="1.1"/>
</svg>
<!-- cursor -->
<svg class="a" style="left:1090px;top:435px" width="16" height="22" viewBox="0 0 16 22">
<path d="M2.3 1.5 V17.5 L6 13.8 L8.5 19.5 Q9 20.3 9.8 20 L10.8 19.5 Q11.5 19 11.2 18.3 L8.8 12.7 H13.8 Z" fill="#fff" stroke="#111" stroke-width="1.1" stroke-linejoin="round"/>
</svg>
<div class="a" style="left:0;top:858px;width:1443px;height:47px;background:#0f2350"></div>
<div class="a" style="left:0;top:858px;width:1443px;height:1px;background:#0b1a44"></div>
<div class="a" style="left:218px;top:858px;width:1147px;height:1px;background:#3a4256"></div>
<div class="a" style="left:0;top:858px;width:1px;height:47px;background:#808080"></div><div class="a" style="left:1px;top:858px;width:1px;height:47px;background:#3a3630"></div>
<div class="a" style="left:1442px;top:858px;width:1px;height:47px;background:#333"></div>
<!-- weather -->
<svg class="a" style="left:16px;top:864px" width="34" height="30" viewBox="0 0 34 30">
<defs><linearGradient id="cld" x1="0" y1="0" x2="0" y2="1"><stop offset="0" stop-color="#d0def4"/><stop offset="1" stop-color="#f0f6fc"/></linearGradient></defs>
<path d="M15 6 Q20 9 18.5 14.5 Q15.5 18 10 16.5 Q8 17.5 6 14.5 Q11 15 13.5 12 Q15.5 9 15 6Z" fill="#f8b810"/>
<path d="M11 25 Q8.5 25 8.5 21.5 Q8.5 18 12 18 Q13.5 14 18 14 Q22 14 23.5 17.5 Q27.5 17 27.5 21 Q27.5 25 24 25 Z" fill="url(#cld)"/>
</svg>
<div class="t" style="left:53px;top:868px;color:#fff;font-size:11.5px;-webkit-text-stroke:0.35px #fff">74°F</div>
<div class="t" style="left:53px;top:884px;color:#cdd3e0;font-size:12.4px">Mostly cloudy</div>
<!-- start -->
<svg class="a" style="left:535px;top:870px" width="24" height="25" viewBox="0 0 24 25">
<defs><linearGradient id="win1" x1="0" y1="0" x2="1" y2="1"><stop offset="0" stop-color="#8ad8fa"/><stop offset="1" stop-color="#1aa4f8"/></linearGradient></defs>
<rect x="0.3" y="0.5" width="11" height="11" rx="1" fill="url(#win1)"/><rect x="12.5" y="0.5" width="11" height="11" rx="1" fill="url(#win1)"/>
<rect x="0.3" y="12.7" width="11" height="11" rx="1" fill="url(#win1)"/><rect x="12.5" y="12.7" width="11" height="11" rx="1" fill="url(#win1)"/>
</svg>
<!-- task view -->
<svg class="a" style="left:578px;top:870px" width="27" height="24">
<rect x="1" y="6.7" width="18" height="16.5" rx="1.5" fill="#5c5c5e"/>
<rect x="7" y="0.5" width="18.3" height="16.5" rx="1.5" fill="#f0f0f0"/>
<path d="M7 6.7 H19 V17 H7Z" fill="#a8a8a8"/>
</svg>
<!-- chat -->
<svg class="a" style="left:622px;top:869px" width="25" height="25">
<defs><linearGradient id="chat" x1="0" y1="0" x2="1" y2="1"><stop offset="0" stop-color="#9a70d8"/><stop offset="1" stop-color="#5a60d0"/></linearGradient></defs>
<path d="M12.5 1.5 A11 11 0 1 1 7 22 L1.8 23 L3 18 A11 11 0 0 1 12.5 1.5Z" fill="url(#chat)"/>
<rect x="6" y="8.5" width="9.5" height="8.5" rx="1.5" fill="#fff"/><path d="M15.5 11.5 L18.8 9 V16.5 L15.5 14Z" fill="#fff"/>
</svg>
<!-- chrome -->
<svg class="a" style="left:668px;top:870px" width="23" height="23" viewBox="0 0 48 48">
<circle cx="24" cy="24" r="22" fill="#2ea04a"/>
<path d="M24 2 A22 22 0 0 1 43 13 L24 13 A11 11 0 0 0 14.5 18.5 L5 13 A22 22 0 0 1 24 2Z" fill="#e23a2e"/>
<path d="M43 13 A22 22 0 0 1 24 46 L33.5 29.5 A11 11 0 0 0 33.5 18.5 Z" fill="#fbc02d"/>
<circle cx="24" cy="24" r="11" fill="#fff"/><circle cx="24" cy="24" r="8.8" fill="#3a7de8"/>
</svg>
<!-- explorer active -->
<div class="a" style="left:703px;top:862px;width:40px;height:39px;border-radius:5px;background:#1b2c5c;border:1px solid #22345f"></div>
<div class="a" style="left:703px;top:862px;width:36px;height:39px;border-radius:5px;background:#1e2f5e;border:1px solid #2a3c6a"></div>
<svg class="a" style="left:710px;top:870px" width="27" height="24" viewBox="0 0 27 24">
<defs><linearGradient id="fold2" x1="0" y1="0" x2="0" y2="1"><stop offset="0" stop-color="#ffd860"/><stop offset="1" stop-color="#f8c030"/></linearGradient></defs>
<path d="M0.5 2 Q0.5 1 1.5 1 H9 L11 3 H25 Q26 3 26 4 V6 H0.5Z" fill="#e8a400"/>
<rect x="0.5" y="4.5" width="25.5" height="18" rx="1" fill="url(#fold2)"/>
<rect x="6" y="14" width="15" height="9" rx="1" fill="#1f7ad8"/><rect x="8" y="15.5" width="11" height="1.2" fill="#5ab0f0"/>
</svg>
<div class="a" style="left:715px;top:898px;width:16px;height:3px;border-radius:2px;background:#4ca8f8"></div>
<!-- mail -->
<svg class="a" style="left:754px;top:870px" width="26" height="24" viewBox="0 0 26 24">
<path d="M1 9 L13 1 L25 9 V22 H1Z" fill="#0a64c0"/>
<path d="M4 9 H22 V15 L13 20 L4 15Z" fill="#f4f4f4"/>
<path d="M1 9 L13 17 L25 9 V22.5 H1Z" fill="#2a9de8"/>
<path d="M1 22.5 L13 14 L25 22.5Z" fill="#48b8f0"/>
</svg>
<!-- settings -->
<svg class="a" style="left:799px;top:869px" width="25" height="25" viewBox="0 0 25 25">
<g transform="translate(12.5 12.5)">
<path d="M-2.5 -12 H2.5 L3.2 -8.5 L6.5 -10.5 L10 -7 L8 -3.8 L12 -2.5 V2.5 L8 3.8 L10 7 L6.5 10.5 L3.2 8.5 L2.5 12 H-2.5 L-3.2 8.5 L-6.5 10.5 L-10 7 L-8 3.8 L-12 2.5 V-2.5 L-8 -3.8 L-10 -7 L-6.5 -10.5 L-3.2 -8.5Z" fill="#6c7a8a"/>
<circle r="6.3" fill="#fff"/><circle r="4.8" fill="#1060c0"/>
</g>
</svg>
<div class="a" style="left:808px;top:898px;width:6px;height:3px;border-radius:2px;background:#8a92a8"></div>
<!-- anydesk active -->
<div class="a" style="left:836px;top:862px;width:38px;height:39px;border-radius:5px;background:#462428"></div>
<svg class="a" style="left:842px;top:870px" width="25" height="25" viewBox="0 0 25 25">
<rect x="0.5" y="0" width="24.5" height="24.3" fill="#ef3b36"/>
<path d="M4 12.2 L9.3 7 L14.6 12.2 L9.3 17.5Z" fill="#fff"/>
<path d="M13 7.7 L14.3 6.4 L20.2 12.2 L14.3 18 L13 16.7 L17.6 12.2Z" fill="#fff"/>
</svg>
<div class="a" style="left:843px;top:898px;width:23px;height:3px;border-radius:2px;background:#b0a8b0"></div>
<!-- cmd -->
<svg class="a" style="left:886px;top:871px" width="24" height="21">
<rect x="0.5" y="0.5" width="23" height="20" fill="#0c0c0c" stroke="#7a8088" stroke-width="1"/>
<rect x="1" y="1" width="22" height="1.5" fill="#a0a8b0"/>
<path d="M3 6 H6 M3 6 V9 H6 M8 6 V9 M9 6 L12 9 M15 10 H21" stroke="#e0e0e0" stroke-width="1"/>
</svg>
<div class="a" style="left:895px;top:898px;width:6px;height:3px;border-radius:2px;background:#8a92a8"></div>
<!-- tray -->
<svg class="a" style="left:1260px;top:868px" width="80" height="26">
<path d="M7 16.5 L12.8 10.5 L18.6 16.5" stroke="#fff" stroke-width="1.1" fill="none"/>
<path d="M42.9 7.5 H33.9 Q33.2 7.5 33.2 8.2 V17.6 Q33.2 18.3 33.9 18.3 H44.5" stroke="#fff" stroke-width="1.1" fill="none"/>
<path d="M38.7 18.3 V21.5 M43.6 18.3 V21.5 M36.2 21.5 H44.8" stroke="#fff" stroke-width="1.1" fill="none"/>
<rect x="44.5" y="6.3" width="4.3" height="6.4" rx="0.7" fill="none" stroke="#fff" stroke-width="1.1"/>
<path d="M44.5 8.3 H48.8" stroke="#fff" stroke-width="1"/>
<path d="M46.6 12.7 V22" stroke="#fff" stroke-width="1.1"/>
<path d="M57.3 11.2 H59.8 L63.5 8.3 V19.5 L59.8 16.6 H57.3 Z" stroke="#fff" stroke-width="1.1" fill="none" stroke-linejoin="round"/>
<path d="M65.6 12 Q67 14 65.6 16.2" stroke="#fff" stroke-width="1" fill="none"/>
<path d="M67.5 9.6 Q70.6 14 67.5 18.8" stroke="#fff" stroke-width="1" fill="none"/>
<path d="M70 7.3 Q74.2 14 70 21" stroke="#5a6898" stroke-width="1" fill="none"/>
</svg>
<div class="t" style="left:1340px;top:867px;width:59px;text-align:right;color:#fff;font-size:11.5px">4:01 AM</div>
<div class="t" style="left:1340px;top:883px;width:59px;text-align:right;color:#fff;font-size:11.5px">9/1/2022</div>
<div class="a" style="left:1406px;top:874px;width:16px;height:16px;border-radius:8px;background:#1f8ef8"></div>
<div class="t" style="left:1406px;top:875px;width:16px;text-align:center;color:#0a1a3a;font-size:10.5px">2</div>
</body></html>
